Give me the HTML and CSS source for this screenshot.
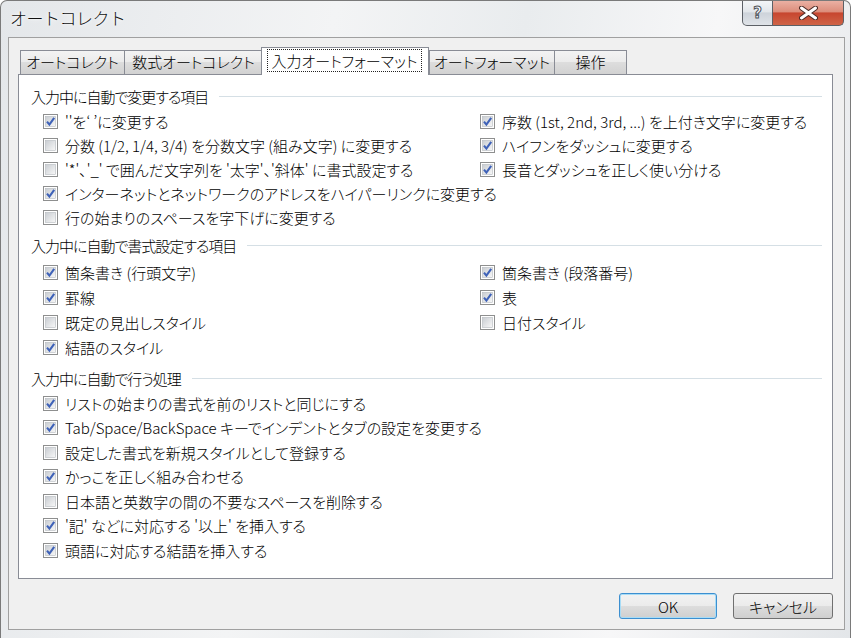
FILE: index.html
```html
<!DOCTYPE html>
<html lang="ja">
<head>
    <meta charset="UTF-8">
    <title>オートコレクト</title>
    <link rel="stylesheet" href="styles.css">
</head>
<body>
    <svg class="defs" width="0" height="0">
        <defs>
            <linearGradient id="boxFill" x1="0" y1="0" x2="1" y2="1">
                <stop offset="0" stop-color="#c9cdd2"/>
                <stop offset="1" stop-color="#f8f8f8"/>
            </linearGradient>
            <symbol id="chk-off" viewBox="0 0 15 15">
                <rect x="0.5" y="0.5" width="14" height="14" fill="#fff" stroke="#8e8f8f"/>
                <rect x="2.5" y="2.5" width="10" height="10" fill="url(#boxFill)" stroke="#b5b9be" stroke-width="0.6"/>
            </symbol>
            <symbol id="chk-on" viewBox="0 0 15 15">
                <rect x="0.5" y="0.5" width="14" height="14" fill="#fff" stroke="#8e8f8f"/>
                <rect x="2.5" y="2.5" width="10" height="10" fill="url(#boxFill)" stroke="#b5b9be" stroke-width="0.6"/>
                <path d="M4 7.6 L6.4 10.6 L11.2 3.8" fill="none" stroke="#3f62b8" stroke-width="2.1"/>
            </symbol>
        </defs>
    </svg>

    <div class="window">
        <div class="titlebar">
            <span class="title">オートコレクト</span>
            <div class="caption">
                <div class="cap-btn cap-help">?</div>
                <div class="cap-btn cap-close">
                    <svg width="19" height="14" viewBox="0 0 19 14">
                        <path d="M2.5 2 L16.5 12 M16.5 2 L2.5 12" stroke="#4a2a25" stroke-width="5" stroke-linecap="round"/>
                        <path d="M2.5 2 L16.5 12 M16.5 2 L2.5 12" stroke="#fff" stroke-width="3" stroke-linecap="round"/>
                    </svg>
                </div>
            </div>
        </div>

        <div class="client">
            <div class="tabs">
                <div class="tab tab-autocorrect">オートコレクト</div>
                <div class="tab tab-math">数式オートコレクト</div>
                <div class="tab tab-active"><span class="focus">入力オートフォーマット</span></div>
                <div class="tab tab-format">オートフォーマット</div>
                <div class="tab tab-action">操作</div>
            </div>

            <div class="panel">
                <!-- 入力中に自動で変更する項目 -->
                <div class="group group-replace">
                    <div class="group-title">入力中に自動で変更する項目</div>
                    <div class="group-body">
                        <div class="col">
                            <div class="check"><svg class="box"><use href="#chk-on"/></svg>''を‘ ’に変更する</div>
                            <div class="check"><svg class="box"><use href="#chk-off"/></svg>分数 (1/2, 1/4, 3/4) を分数文字 (組み文字) に変更する</div>
                            <div class="check"><svg class="box"><use href="#chk-off"/></svg>'*'、'_' で囲んだ文字列を '太字'、'斜体' に書式設定する</div>
                            <div class="check"><svg class="box"><use href="#chk-on"/></svg>インターネットとネットワークのアドレスをハイパーリンクに変更する</div>
                            <div class="check"><svg class="box"><use href="#chk-off"/></svg>行の始まりのスペースを字下げに変更する</div>
                        </div>
                        <div class="col">
                            <div class="check"><svg class="box"><use href="#chk-on"/></svg>序数 (1st, 2nd, 3rd, ...) を上付き文字に変更する</div>
                            <div class="check"><svg class="box"><use href="#chk-on"/></svg>ハイフンをダッシュに変更する</div>
                            <div class="check"><svg class="box"><use href="#chk-on"/></svg>長音とダッシュを正しく使い分ける</div>
                        </div>
                    </div>
                </div>

                <!-- 入力中に自動で書式設定する項目 -->
                <div class="group group-format">
                    <div class="group-title">入力中に自動で書式設定する項目</div>
                    <div class="group-body">
                        <div class="col">
                            <div class="check"><svg class="box"><use href="#chk-on"/></svg>箇条書き (行頭文字)</div>
                            <div class="check"><svg class="box"><use href="#chk-on"/></svg>罫線</div>
                            <div class="check"><svg class="box"><use href="#chk-off"/></svg>既定の見出しスタイル</div>
                            <div class="check"><svg class="box"><use href="#chk-on"/></svg>結語のスタイル</div>
                        </div>
                        <div class="col">
                            <div class="check"><svg class="box"><use href="#chk-on"/></svg>箇条書き (段落番号)</div>
                            <div class="check"><svg class="box"><use href="#chk-on"/></svg>表</div>
                            <div class="check"><svg class="box"><use href="#chk-off"/></svg>日付スタイル</div>
                        </div>
                    </div>
                </div>

                <!-- 入力中に自動で行う処理 -->
                <div class="group group-action">
                    <div class="group-title">入力中に自動で行う処理</div>
                    <div class="group-body">
                        <div class="col">
                            <div class="check"><svg class="box"><use href="#chk-on"/></svg>リストの始まりの書式を前のリストと同じにする</div>
                            <div class="check"><svg class="box"><use href="#chk-on"/></svg>Tab/Space/BackSpace キーでインデントとタブの設定を変更する</div>
                            <div class="check"><svg class="box"><use href="#chk-off"/></svg>設定した書式を新規スタイルとして登録する</div>
                            <div class="check"><svg class="box"><use href="#chk-on"/></svg>かっこを正しく組み合わせる</div>
                            <div class="check"><svg class="box"><use href="#chk-off"/></svg>日本語と英数字の間の不要なスペースを削除する</div>
                            <div class="check"><svg class="box"><use href="#chk-on"/></svg>'記' などに対応する '以上' を挿入する</div>
                            <div class="check"><svg class="box"><use href="#chk-on"/></svg>頭語に対応する結語を挿入する</div>
                        </div>
                    </div>
                </div>
            </div>

            <div class="footer">
                <button class="btn btn-default">OK</button>
                <button class="btn btn-cancel">キャンセル</button>
            </div>
        </div>
    </div>
</body>
</html>
```

FILE: styles.css
```css
* {
    box-sizing: border-box;
}

body {
    margin: 0;
    background: #ffffff;
    font-family: "Noto Sans CJK JP", "Noto Sans", sans-serif;
    font-size: 15px;
    font-weight: 300;
    font-feature-settings: "palt";
    color: #000;
}

.defs {
    position: absolute;
}

.window {
    width: 851px;
    height: 638px;
    border: 1px solid #7a7a7a;
    border-bottom: none;
    border-radius: 7px 7px 0 0;
    background: linear-gradient(100deg, #e4e7ea 0%, #f3f4f5 35%, #e9ecee 55%, #f7f7f8 75%, #e3e6e9 100%);
    display: flex;
    flex-direction: column;
}

/* Title bar */
.titlebar {
    height: 36px;
    display: flex;
    align-items: flex-start;
    padding-left: 9px;
}

.title {
    font-size: 17px;
    line-height: 34px;
    font-feature-settings: normal;
    letter-spacing: -0.5px;
    color: #111;
    text-shadow: 0 0 6px #fff, 0 0 3px #fff;
}

.caption {
    margin-left: auto;
    margin-right: 6px;
    display: flex;
}

.cap-btn {
    height: 25px;
    border: 1px solid #5c6066;
    border-top: none;
    display: flex;
    align-items: center;
    justify-content: center;
}

.cap-help {
    width: 31px;
    border-radius: 0 0 0 5px;
    background: linear-gradient(#f3f5f7, #e2e6ea 45%, #cdd3da 50%, #dfe3e8);
    font-family: "DejaVu Sans", sans-serif;
    font-size: 15px;
    font-weight: bold;
    color: #fff;
    -webkit-text-stroke: 1px #4e5359;
}

.cap-close {
    width: 71px;
    border-left: none;
    border-radius: 0 0 5px 0;
    background: linear-gradient(#eab0a3, #dc8d7b 45%, #c7462f 50%, #cf6447);
}

/* Client area */
.client {
    margin-left: 7px;
    width: 837px;
    height: 593px;
    border: 1px solid #a0a0a0;
    background: #f0f0f0;
    padding: 9px 11px 10px 9px;
    display: flex;
    flex-direction: column;
}

.tabs {
    display: flex;
    height: 27px;
    padding-left: 2px;
}

.tab {
    height: 24px;
    margin-top: 3px;
    border: 1px solid #898c95;
    border-bottom: none;
    background: linear-gradient(#f3f3f3, #ebebeb 50%, #dddddd 50%, #d2d2d2);
    text-align: center;
    line-height: 22px;
    white-space: nowrap;
}

.tab-autocorrect { width: 105px; }
.tab-math { width: 139px; margin-left: -1px; }
.tab-format { width: 126px; }
.tab-action { width: 73px; margin-left: -1px; }

.tab-active {
    width: 168px;
    height: 28px;
    margin: 0 0 -1px -2px;
    padding: 1px 6px 3px 5px;
    background: #fff;
    position: relative;
    z-index: 1;
    line-height: 22px;
}

.focus {
    display: block;
    height: 100%;
    border: 1px dotted #222;
}

.panel {
    width: 815px;
    height: 505px;
    border: 1px solid #898c95;
    background: #fff;
    padding: 9px 10px 0 12px;
}

/* Groups */
.group-title {
    display: flex;
    align-items: center;
    height: 24px;
    white-space: nowrap;
    letter-spacing: -1px;
}

.group-title::after {
    content: "";
    flex: 1;
    height: 1px;
    margin-left: 11px;
    background: #d5dfe5;
}

.group-body {
    display: grid;
    grid-template-columns: 437px 1fr;
    padding-left: 12px;
    margin-top: 1px;
}

.group + .group {
    margin-top: 4px;
}

.check {
    display: flex;
    align-items: center;
    height: 24px;
    white-space: nowrap;
}

.group-format .check {
    height: 25px;
}

.group-format .group-body {
    margin-top: 3px;
}

.group-action {
    margin-top: 6px !important;
}

.group-action .check {
    height: 24.5px;
}

.box {
    width: 15px;
    height: 15px;
    margin-right: 7px;
    flex-shrink: 0;
}

/* Buttons */
.footer {
    display: flex;
    justify-content: flex-end;
    gap: 16px;
    margin-top: 14px;
}

.btn {
    height: 26px;
    border: 1px solid #707070;
    border-radius: 3px;
    background: linear-gradient(#f2f2f2, #ebebeb 50%, #dddddd 50%, #cfcfcf);
    font-family: inherit;
    font-size: 15px;
    font-weight: 300;
    font-feature-settings: "palt";
    color: #000;
    padding: 0;
}

.btn-default {
    width: 98px;
    border-color: #3c8fd0;
    box-shadow: inset 0 0 0 1px #a8dcf6;
}

.btn-cancel {
    width: 100px;
}
```
